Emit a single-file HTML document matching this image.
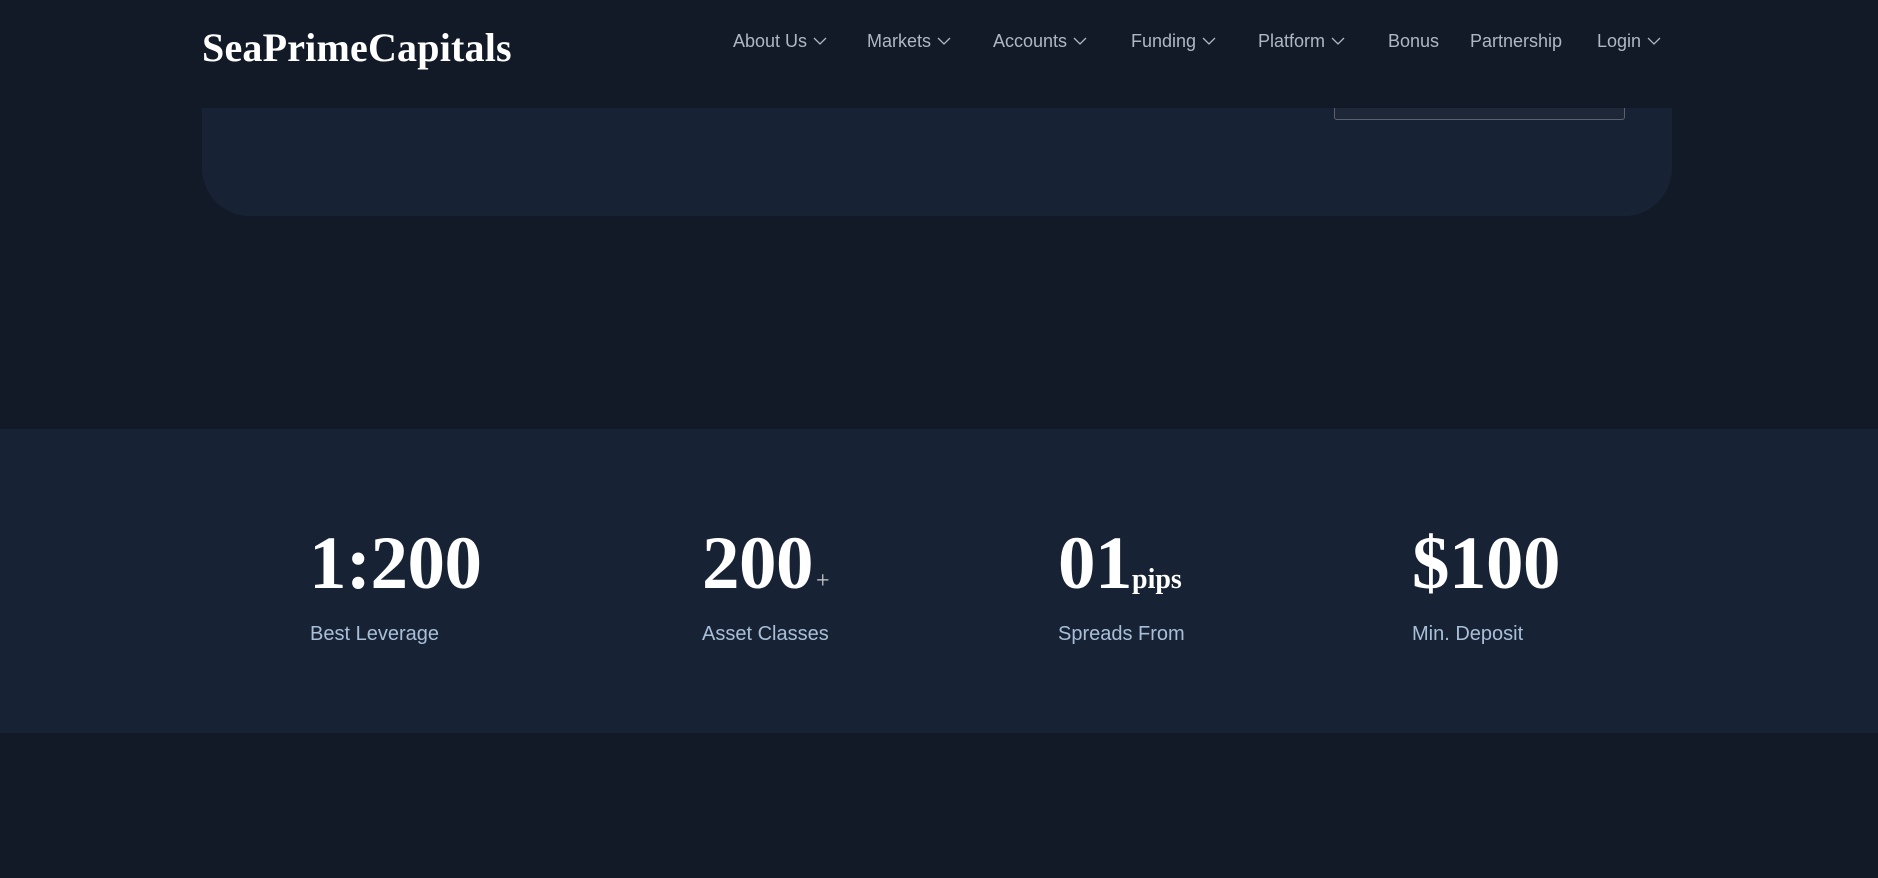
<!DOCTYPE html>
<html><head><meta charset="utf-8"><style>
*{margin:0;padding:0;box-sizing:border-box}
body{width:1878px;height:878px;background:#131a27;position:relative;overflow:hidden;font-family:"Liberation Sans",sans-serif}
.nav{position:absolute;left:0;top:0;width:1878px;height:108px;background:#131a27;z-index:2}
.logo{position:absolute;left:202px;top:24px;font-family:"Liberation Serif",serif;font-weight:bold;font-size:40px;color:#fff;letter-spacing:0.2px}
.ni{position:absolute;top:31px;font-size:18px;color:#aeb7c4;white-space:nowrap}
.ni svg{vertical-align:middle;margin-left:6px;margin-top:-3px}
.card{position:absolute;left:202px;top:60px;width:1470px;height:156px;background:#172334;border-radius:0 0 48px 48px}
.btn{position:absolute;left:1334px;top:60px;width:291px;height:60px;border:1px solid #5a6270;border-top:none;border-radius:0 0 3px 3px;background:#1d2738;z-index:1}
.band{position:absolute;left:0;top:429px;width:1878px;height:304px;background:#172334}
.num{position:absolute;top:519px;font-family:"Liberation Serif",serif;font-weight:bold;font-size:75px;line-height:90px;color:#fff;letter-spacing:-0.5px;white-space:nowrap}
.num small{font-size:28px;letter-spacing:0}
.lab{position:absolute;top:623px;font-size:20px;color:#a9bfd8}
</style></head><body>
<div class="card"></div><div class="btn"></div>
<div class="nav">
<div class="logo">SeaPrimeCapitals</div>
<div class="ni" style="left:733px">About Us<svg width="14" height="8"><path d="M1 1l6 6 6-6" stroke="#aeb7c4" fill="none" stroke-width="1.3"/></svg></div>
<div class="ni" style="left:867px">Markets<svg width="14" height="8"><path d="M1 1l6 6 6-6" stroke="#aeb7c4" fill="none" stroke-width="1.3"/></svg></div>
<div class="ni" style="left:993px">Accounts<svg width="14" height="8"><path d="M1 1l6 6 6-6" stroke="#aeb7c4" fill="none" stroke-width="1.3"/></svg></div>
<div class="ni" style="left:1131px">Funding<svg width="14" height="8"><path d="M1 1l6 6 6-6" stroke="#aeb7c4" fill="none" stroke-width="1.3"/></svg></div>
<div class="ni" style="left:1258px">Platform<svg width="14" height="8"><path d="M1 1l6 6 6-6" stroke="#aeb7c4" fill="none" stroke-width="1.3"/></svg></div>
<div class="ni" style="left:1388px">Bonus</div>
<div class="ni" style="left:1470px">Partnership</div>
<div class="ni" style="left:1597px">Login<svg width="14" height="8"><path d="M1 1l6 6 6-6" stroke="#aeb7c4" fill="none" stroke-width="1.3"/></svg></div>
</div>
<div class="band"></div>
<div class="num" style="left:309px">1:200</div>
<div class="num" style="left:702px">200<small style="font-weight:normal;font-size:24px;color:#ccc;margin-left:3px">+</small></div>
<div class="num" style="left:1058px">01<small>pips</small></div>
<div class="num" style="left:1412px">$100</div>
<div class="lab" style="left:310px">Best Leverage</div>
<div class="lab" style="left:702px">Asset Classes</div>
<div class="lab" style="left:1058px">Spreads From</div>
<div class="lab" style="left:1412px">Min. Deposit</div>
</body></html>
